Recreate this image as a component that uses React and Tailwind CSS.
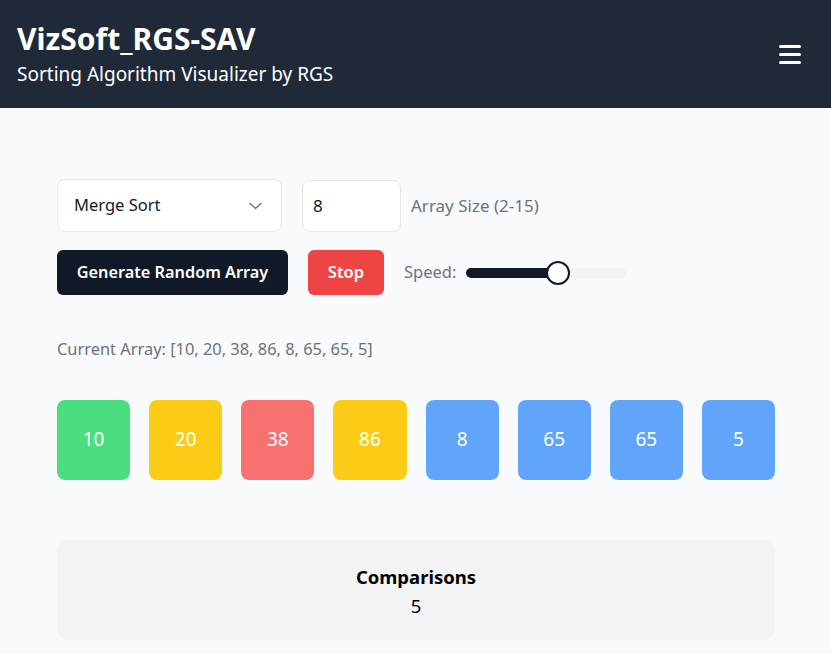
const bars = [
  { value: 10, color: 'bg-[#4ade80]' },
  { value: 20, color: 'bg-[#facc15]' },
  { value: 38, color: 'bg-[#f87171]' },
  { value: 86, color: 'bg-[#facc15]' },
  { value: 8, color: 'bg-[#60a5fa]' },
  { value: 65, color: 'bg-[#60a5fa]' },
  { value: 65, color: 'bg-[#60a5fa]' },
  { value: 5, color: 'bg-[#60a5fa]' },
]

export default function App() {
  const speed = 0.575

  return (
    <div className="min-h-screen bg-[#f9fafb] font-['Noto_Sans',sans-serif]">
      <header className="flex h-[108px] items-center justify-between bg-[#1f2937] px-[17px] text-white">
        <div>
          <h1 className="text-[30px] font-bold leading-[38px]">VizSoft_RGS-SAV</h1>
          <p className="mt-[2px] text-[19px] leading-[28px]">Sorting Algorithm Visualizer by RGS</p>
        </div>
        <button type="button" className="mr-[13px] flex w-[22px] flex-col gap-[5px]">
          <span className="h-[3px] w-full rounded-full bg-white" />
          <span className="h-[3px] w-full rounded-full bg-white" />
          <span className="h-[3px] w-full rounded-full bg-white" />
        </button>
      </header>

      <main className="pl-[57px] pr-[56px] pt-[71px] pb-[16px]">
        <div className="flex items-center gap-5">
          <div className="flex h-[53px] w-[225px] items-center justify-between rounded-lg border border-[#e5e7eb] bg-white pl-4 pr-[19px]">
            <span className="text-[16.5px] text-[#111827]">Merge Sort</span>
            <svg width="13" height="8" viewBox="0 0 13 8" fill="none" className="text-[#6b7280]">
              <path d="M1 1.5l5.5 5 5.5-5" stroke="currentColor" strokeWidth="1.4" strokeLinecap="round" strokeLinejoin="round" />
            </svg>
          </div>
          <div className="flex items-center gap-[10px]">
            <div className="flex h-[52px] w-[99px] items-center rounded-lg border border-[#e5e7eb] bg-white pl-[10px] text-[17px] text-[#111827]">
              8
            </div>
            <span className="text-[17px] text-[#6b7280]">Array Size (2-15)</span>
          </div>
        </div>

        <div className="mt-[18px] flex items-center gap-5">
          <button type="button" className="h-[45px] w-[231px] rounded-md bg-[#111827] text-[16.3px] font-semibold text-white">
            Generate Random Array
          </button>
          <button type="button" className="h-[45px] w-[76px] rounded-md bg-[#ef4444] text-[16.5px] font-semibold text-white">
            Stop
          </button>
          <div className="flex items-center gap-[10px]">
            <span className="text-[16.5px] text-[#6b7280]">Speed:</span>
            <div className="relative h-[10px] w-[160px] rounded-full bg-[#f1f3f7]">
              <div className="h-full rounded-full bg-[#111827]" style={{ width: `${speed * 100}%` }} />
              <div
                className="absolute top-1/2 h-[24px] w-[24px] -translate-x-1/2 -translate-y-1/2 rounded-full border-2 border-[#111827] bg-white"
                style={{ left: `${speed * 100}%` }}
              />
            </div>
          </div>
        </div>

        <p className="mt-[42px] text-[16.4px] text-[#6b7280]">Current Array: [10, 20, 38, 86, 8, 65, 65, 5]</p>

        <div className="mt-[38px] grid grid-cols-8 gap-[19px]">
          {bars.map((bar, i) => (
            <div
              key={i}
              className={`flex h-[80px] items-center justify-center rounded-lg text-[19px] text-white ${bar.color}`}
            >
              {bar.value}
            </div>
          ))}
        </div>

        <div className="mt-[60px] flex h-[100px] flex-col items-center justify-center rounded-xl bg-[#f3f4f6] pt-[4px]">
          <h2 className="text-[18.5px] font-bold leading-[26px] text-black">Comparisons</h2>
          <p className="mt-[3px] text-[18.5px] leading-[26px] text-black">5</p>
        </div>
      </main>
    </div>
  )
}
